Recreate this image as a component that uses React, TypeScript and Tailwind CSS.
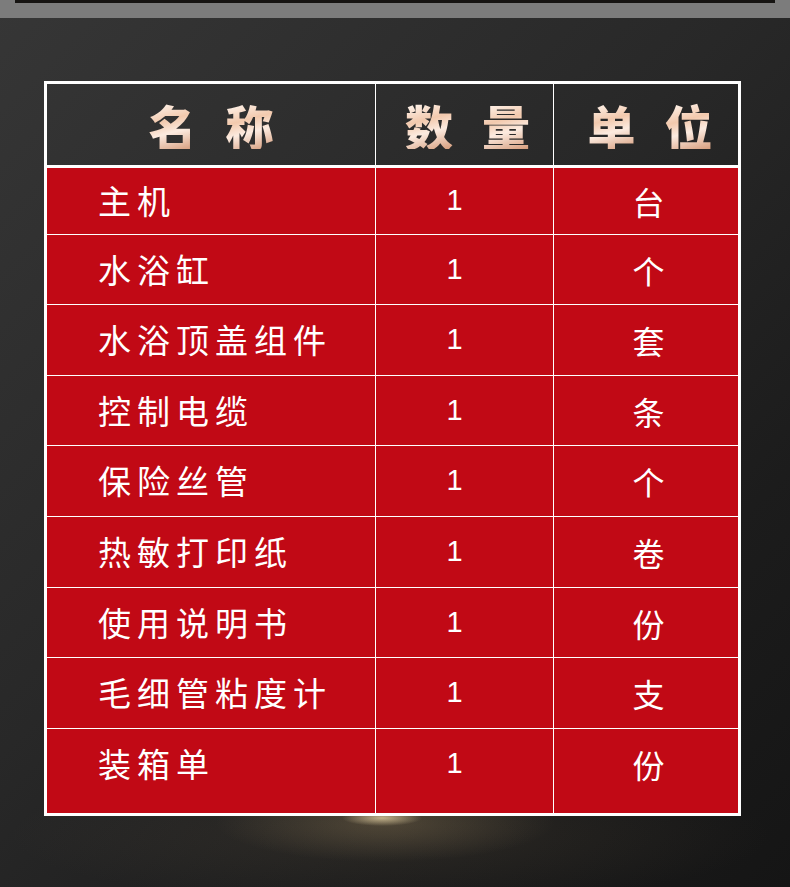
const rows = [
  { name: '主机', qty: '1', unit: '台', h: 'h-[66px]' },
  { name: '水浴缸', qty: '1', unit: '个', h: 'h-[70px]' },
  { name: '水浴顶盖组件', qty: '1', unit: '套', h: 'h-[71px]' },
  { name: '控制电缆', qty: '1', unit: '条', h: 'h-[70px]' },
  { name: '保险丝管', qty: '1', unit: '个', h: 'h-[71px]' },
  { name: '热敏打印纸', qty: '1', unit: '卷', h: 'h-[71px]' },
  { name: '使用说明书', qty: '1', unit: '份', h: 'h-[70px]' },
  { name: '毛细管粘度计', qty: '1', unit: '支', h: 'h-[71px]' },
  { name: '装箱单', qty: '1', unit: '份', h: 'h-[85px]' },
];

const cjk = "font-['Noto_Sans_CJK_SC',sans-serif]";

function HeadCell({ chars, extra }: { chars: string[]; extra?: string }) {
  return (
    <div className={`flex items-center justify-center gap-[29px] ${extra ?? ''}`}>
      {chars.map((c) => (
        <span
          key={c}
          className={`${cjk} text-[48px] leading-none font-black bg-[linear-gradient(165deg,#fff7f1_5%,#f2c9ad_40%,#fcebe0_62%,#d59b7a_100%)] bg-clip-text text-transparent`}
        >
          {c}
        </span>
      ))}
    </div>
  );
}

export default function App() {
  return (
    <div className="w-[790px] h-[887px] overflow-hidden bg-[#1c1c1c] bg-[image:radial-gradient(ellipse_40px_8px_at_382px_818px,rgba(245,225,175,0.7),transparent),radial-gradient(ellipse_170px_40px_at_385px_822px,rgba(150,128,90,0.35),transparent),radial-gradient(ellipse_380px_70px_at_390px_835px,rgba(90,78,60,0.25),transparent),linear-gradient(135deg,#363636_0%,#282828_45%,#1c1c1c_75%,#151515_100%)]">
      <div className="h-[18px] bg-[#7c7c7c] px-[15px]">
        <div className="h-[3px] bg-[#161412]" />
      </div>

      <div className="mt-[63px] ml-[44px] w-[697px] border-[3px] border-white">
        <div className="grid grid-cols-[328px_178px_185px] h-[84px] border-b-[3px] border-white">
          <HeadCell chars={['名', '称']} />
          <HeadCell chars={['数', '量']} extra="border-l border-white pl-[6px]" />
          <HeadCell chars={['单', '位']} extra="border-l border-white pl-[8px]" />
        </div>

        {rows.map((r, i) => {
          const last = i === rows.length - 1;
          const pad = last ? 'pb-[14px]' : '';
          return (
            <div
              key={i}
              className={`grid grid-cols-[328px_178px_185px] bg-[#c10915] text-white ${
                i > 0 ? 'border-t border-white' : ''
              } ${r.h}`}
            >
              <div className={`${cjk} flex items-center pl-[51px] text-[33px] tracking-[6px] ${pad}`}>{r.name}</div>
              <div
                className={`border-l border-white flex items-center justify-center pr-[20px] font-['Liberation_Sans',sans-serif] text-[29px] ${pad}`}
              >
                {r.qty}
              </div>
              <div className={`${cjk} border-l border-white flex items-center justify-center pl-[5px] text-[32px] ${pad}`}>
                {r.unit}
              </div>
            </div>
          );
        })}
      </div>
    </div>
  );
}
